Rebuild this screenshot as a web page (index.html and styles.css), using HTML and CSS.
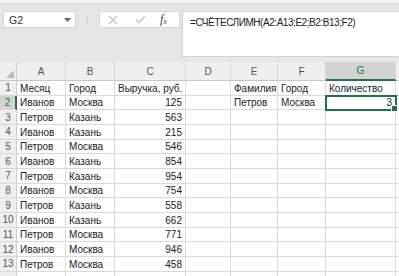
FILE: index.html
```html
<!DOCTYPE html>
<html lang="ru">
<head>
<meta charset="utf-8">
<title>Excel</title>
<link rel="stylesheet" href="styles.css">
</head>
<body>
<div class="ribbon-edge"></div>
<div class="formula-area">
  <div class="namebox"><span>G2</span><svg class="dd" width="7" height="4" viewBox="0 0 7 4"><path d="M0 0h7L3.5 4z" fill="#666"/></svg></div>
  <div class="grip"><i></i><i></i><i></i></div>
  <div class="fxbox">
    <svg class="ico" width="10" height="10" viewBox="0 0 10 10"><path d="M1 1L9 9M9 1L1 9" stroke="#c4c4c4" stroke-width="1.2" fill="none"/></svg>
    <svg class="ico" width="11" height="9" viewBox="0 0 11 9"><path d="M1 4.5L4 7.5L10 1" stroke="#c4c4c4" stroke-width="1.3" fill="none"/></svg>
    <span class="fx">f<sub>x</sub></span>
  </div>
  <div class="formula">=СЧЁТЕСЛИМН(A2:A13;E2;B2:B13;F2)</div>
</div>
<div class="sheet">
  <div class="corner"><svg width="8" height="8" viewBox="0 0 8 8"><path d="M8 0V8H0z" fill="#b9b9b9"/></svg></div>
  <div class="ch">A</div><div class="ch">B</div><div class="ch">C</div><div class="ch">D</div><div class="ch">E</div><div class="ch">F</div><div class="ch sel">G</div><div class="ch"></div>

  <div class="rh">1</div><div class="c">Месяц</div><div class="c">Город</div><div class="c">Выручка, руб.</div><div class="c"></div><div class="c">Фамилия</div><div class="c">Город</div><div class="c">Количество</div><div class="c"></div>
  <div class="rh sel">2</div><div class="c">Иванов</div><div class="c">Москва</div><div class="c n">125</div><div class="c"></div><div class="c">Петров</div><div class="c">Москва</div><div class="c n active">3</div><div class="c"></div>
  <div class="rh">3</div><div class="c">Петров</div><div class="c">Казань</div><div class="c n">563</div><div class="c"></div><div class="c"></div><div class="c"></div><div class="c"></div><div class="c"></div>
  <div class="rh">4</div><div class="c">Иванов</div><div class="c">Казань</div><div class="c n">215</div><div class="c"></div><div class="c"></div><div class="c"></div><div class="c"></div><div class="c"></div>
  <div class="rh">5</div><div class="c">Петров</div><div class="c">Москва</div><div class="c n">546</div><div class="c"></div><div class="c"></div><div class="c"></div><div class="c"></div><div class="c"></div>
  <div class="rh">6</div><div class="c">Иванов</div><div class="c">Казань</div><div class="c n">854</div><div class="c"></div><div class="c"></div><div class="c"></div><div class="c"></div><div class="c"></div>
  <div class="rh">7</div><div class="c">Петров</div><div class="c">Казань</div><div class="c n">954</div><div class="c"></div><div class="c"></div><div class="c"></div><div class="c"></div><div class="c"></div>
  <div class="rh">8</div><div class="c">Иванов</div><div class="c">Москва</div><div class="c n">754</div><div class="c"></div><div class="c"></div><div class="c"></div><div class="c"></div><div class="c"></div>
  <div class="rh">9</div><div class="c">Петров</div><div class="c">Казань</div><div class="c n">558</div><div class="c"></div><div class="c"></div><div class="c"></div><div class="c"></div><div class="c"></div>
  <div class="rh">10</div><div class="c">Иванов</div><div class="c">Казань</div><div class="c n">662</div><div class="c"></div><div class="c"></div><div class="c"></div><div class="c"></div><div class="c"></div>
  <div class="rh">11</div><div class="c">Петров</div><div class="c">Москва</div><div class="c n">771</div><div class="c"></div><div class="c"></div><div class="c"></div><div class="c"></div><div class="c"></div>
  <div class="rh">12</div><div class="c">Иванов</div><div class="c">Москва</div><div class="c n">946</div><div class="c"></div><div class="c"></div><div class="c"></div><div class="c"></div><div class="c"></div>
  <div class="rh">13</div><div class="c">Петров</div><div class="c">Москва</div><div class="c n">458</div><div class="c"></div><div class="c"></div><div class="c"></div><div class="c"></div><div class="c"></div>
  <div class="rh"></div><div class="c"></div><div class="c"></div><div class="c"></div><div class="c"></div><div class="c"></div><div class="c"></div><div class="c"></div><div class="c"></div>
</div>
</body>
</html>
```
FILE: styles.css
```css
* { box-sizing: border-box; }
html, body { margin: 0; padding: 0; }
body {
  width: 399px;
  height: 276px;
  overflow: hidden;
  background: #ffffff;
  font-family: "Liberation Sans", Arial, sans-serif;
  font-size: 10px;
  color: #222;
}
.ribbon-edge {
  height: 4px;
  background: #f7f7f7;
  border-bottom: 1px solid #d6d6d6;
}
.formula-area {
  height: 58px;
  background: #e6e6e6;
  display: flex;
  align-items: flex-start;
  padding-top: 7px;
}
.namebox {
  margin-left: 3px;
  width: 73px;
  height: 17px;
  background: #fff;
  border: 1px solid #d2d2d2;
  display: flex;
  align-items: center;
  justify-content: space-between;
  padding: 1px 4px 0 5px;
  font-size: 10.5px;
  color: #333;
}
.dd { margin-top: 0; }
.grip {
  width: 23px;
  height: 17px;
  display: flex;
  flex-direction: column;
  align-items: center;
  justify-content: center;
  gap: 1px;
}
.grip i {
  display: block;
  width: 1px;
  height: 1px;
  background: #a8a8a8;
}
.fxbox {
  width: 81px;
  height: 17px;
  background: #fff;
  border: 1px solid #d8d8d8;
  display: flex;
  align-items: center;
  padding-left: 8px;
}
.fxbox .ico:first-child { margin-right: 17px; }
.fx {
  margin-left: 14px;
  font-family: "Liberation Serif", "Times New Roman", serif;
  font-style: italic;
  font-size: 12px;
  color: #444;
}
.fx sub { font-size: 8px; vertical-align: -1px; }
.formula {
  margin-left: 2px;
  flex: 1;
  height: 46px;
  background: #fff;
  border: 1px solid #d2d2d2;
  border-right: none;
  padding: 5px 0 0 7px;
  font-size: 10px;
  letter-spacing: -0.45px;
  color: #222;
  white-space: nowrap;
}
.sheet {
  display: grid;
  grid-template-columns: 17px 49px 49px 71px 45px 47px 48px 70px 1fr;
  grid-template-rows: 19px repeat(14, 14.67px);
}
.corner, .ch, .rh {
  background: #efefef;
  color: #555;
  border-right: 1px solid #cfcfcf;
  border-bottom: 1px solid #c6c6c6;
}
.corner {
  display: flex;
  align-items: flex-end;
  justify-content: flex-end;
  padding: 0 2px 2px 0;
}
.ch {
  display: flex;
  align-items: center;
  justify-content: center;
  border-right-color: #d6d6d6;
}
.ch.sel {
  background: #d3d3d3;
  color: #217346;
  border-bottom: 2px solid #217346;
}
.rh {
  display: flex;
  align-items: center;
  justify-content: center;
  border-bottom-color: #d9d9d9;
}
.rh.sel {
  background: #d3d3d3;
  color: #217346;
  border-right: 2px solid #217346;
}
.c {
  border-right: 1px solid #dadada;
  border-bottom: 1px solid #dadada;
  padding: 1px 3px 0;
  display: flex;
  align-items: center;
  white-space: nowrap;
  overflow: hidden;
  color: #222;
}
.c.n { justify-content: flex-end; }
.c.active {
  position: relative;
  overflow: visible;
  outline: 2px solid #217346;
  outline-offset: -1px;
}
.c.active::after {
  content: "";
  position: absolute;
  right: -3px;
  bottom: -3px;
  width: 5px;
  height: 5px;
  background: #217346;
  border: 1px solid #fff;
}
```
